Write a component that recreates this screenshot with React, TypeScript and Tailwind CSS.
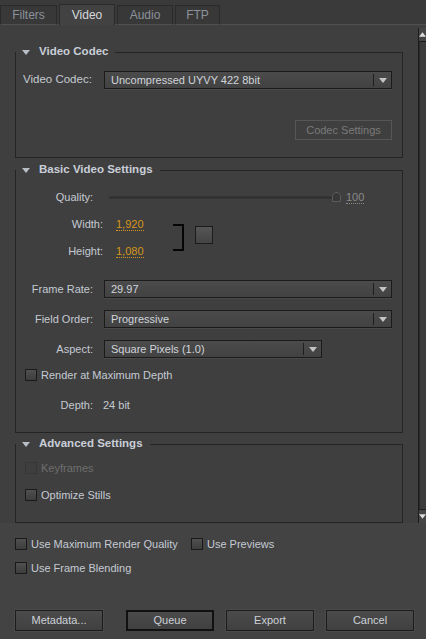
import React from "react";

function Caret({ className = "" }: { className?: string }) {
  return (
    <svg width="8" height="5" viewBox="0 0 8 5" className={className}>
      <path d="M0 0 H8 L4 5 Z" fill="currentColor" />
    </svg>
  );
}

function Select({ value, className = "" }: { value: string; className?: string }) {
  return (
    <div
      className={`flex h-[18px] items-stretch border border-[#1b1b1b] bg-linear-to-b from-[#4b4b4b] to-[#424242] shadow-[0_1px_0_#4a4a4a] ${className}`}
    >
      <span className="flex-1 truncate pl-[6px] leading-[16px] text-[#d0d4db]">{value}</span>
      <span className="my-[2px] w-px bg-[#1e1e1e]" />
      <span className="flex w-[17px] items-center justify-center text-[#c4c4c4]">
        <Caret />
      </span>
    </div>
  );
}

function Check({ disabled }: { disabled?: boolean }) {
  return (
    <span
      className={`h-[12px] w-[12px] shrink-0 border ${
        disabled
          ? "border-[#363636] bg-[#3e3e3e]"
          : "border-[#1a1a1a] bg-linear-to-b from-[#505050] to-[#3d3d3d]"
      }`}
    />
  );
}

function CheckRow({ label, disabled, className = "" }: { label: string; disabled?: boolean; className?: string }) {
  return (
    <div className={`flex h-[14px] items-center gap-[4px] ${className}`}>
      <Check disabled={disabled} />
      <span className={disabled ? "text-[#6e6e6e]" : "text-[#c5cad3]"}>{label}</span>
    </div>
  );
}

function Section({ title, children, className = "" }: { title: string; children: React.ReactNode; className?: string }) {
  return (
    <fieldset className={`border border-[#242424] px-0 ${className}`}>
      <legend className="flex h-[14px] items-center pr-[7px]">
        <Caret className="ml-[6px] text-[#b9bec6]" />
        <span className="ml-[9px] text-[11.5px] font-bold text-[#c9ced8]">{title}</span>
      </legend>
      {children}
    </fieldset>
  );
}

function Label({ children, w = "w-[77px]" }: { children: React.ReactNode; w?: string }) {
  return <span className={`${w} shrink-0 text-right text-[#c5cad3]`}>{children}</span>;
}

function Btn({ children, primary }: { children: React.ReactNode; primary?: boolean }) {
  return (
    <button
      type="button"
      className={`h-[21px] w-[88px] shrink-0 bg-linear-to-b from-[#4b4b4b] to-[#404040] text-[#cdd1d8] ${
        primary ? "border-2 border-[#111]" : "border border-[#1c1c1c] shadow-[0_0_0_1px_#4a4a4a]"
      }`}
    >
      {children}
    </button>
  );
}

const TABS = [
  { name: "Filters", w: "w-[57px]" },
  { name: "Video", w: "w-[56px]", active: true },
  { name: "Audio", w: "w-[56px]" },
  { name: "FTP", w: "w-[45px]" },
];

export default function App() {
  return (
    <div className="flex h-[639px] w-[426px] flex-col overflow-hidden bg-[#3f3f3f] font-['Liberation_Sans',Arial,sans-serif] text-[11px]">
      {/* tabs */}
      <div className="flex h-[25px] shrink-0 items-end gap-[2px] border-b border-[#505050] bg-[#3a3a3a]">
        {TABS.map((t) => (
          <div
            key={t.name}
            className={`${t.w} -mb-px flex h-[20px] items-center justify-center border-x border-t border-[#2a2a2a] text-[12px] ${
              t.active
                ? "h-[21px] bg-[#424242] text-[#d6d9de]"
                : "border-b border-b-[#505050] bg-[#383838] text-[#8c929b]"
            }`}
          >
            {t.name}
          </div>
        ))}
      </div>

      {/* scroll area */}
      <div className="flex h-[498px] shrink-0">
        <div className="flex-1 px-[15px] pt-[20px]">
          <Section title="Video Codec" className="pb-[17px]">
            <div className="mt-[12px] flex items-center pl-[7px] pr-[10px]">
              <span className="w-[81px] shrink-0 text-[11.5px] text-[#c5cad3]">Video Codec:</span>
              <Select value="Uncompressed UYVY 422 8bit" className="flex-1" />
            </div>
            <div className="mt-[31px] flex justify-end pr-[10px]">
              <div className="flex h-[20px] w-[97px] items-center justify-center border border-[#565656] text-[#7a7a7a]">
                Codec Settings
              </div>
            </div>
          </Section>

          <Section title="Basic Video Settings" className="mt-[5px] pb-[20px]">
            {/* quality */}
            <div className="mt-[13px] flex h-[14px] items-center">
              <Label>Quality:</Label>
              <div className="relative ml-[16px] h-[10px] w-[232px]">
                <div className="absolute left-0 right-[4px] top-[4px] h-[3px] border-y border-[#363636] bg-[#2e2e2e]" />
                <svg width="9" height="10" viewBox="0 0 9 10" className="absolute right-0 top-0">
                  <path d="M0.5 9.5 V3.5 L3 0.5 H6 L8.5 3.5 V9.5 Z" fill="#383838" stroke="#5c5c5c" />
                </svg>
              </div>
              <span className="ml-[5px] border-b border-dotted border-[#8a8a8a] leading-[12px] text-[#8a8a8a]">100</span>
            </div>

            {/* width / height */}
            <div className="mt-[13px] flex items-center">
              <div className="flex flex-col gap-[13px]">
                <div className="flex h-[14px] items-center">
                  <Label w="w-[87px]">Width:</Label>
                  <span className="ml-[13px] w-[57px]">
                    <span className="border-b border-dotted border-[#d4961a] leading-[12px] text-[#d4961a]">1,920</span>
                  </span>
                </div>
                <div className="flex h-[14px] items-center">
                  <Label w="w-[87px]">Height:</Label>
                  <span className="ml-[13px] w-[57px]">
                    <span className="border-b border-dotted border-[#d4961a] leading-[12px] text-[#d4961a]">1,080</span>
                  </span>
                </div>
              </div>
              <div className="h-[27px] w-[11px] border-y-2 border-r-2 border-[#050505]" />
              <div className="-mt-[6px] ml-[11px] h-[18px] w-[18px] border border-[#1c1c1c] bg-linear-to-b from-[#555] to-[#444]" />
            </div>

            {/* selects */}
            <div className="mt-[22px] flex items-center pr-[10px]">
              <Label>Frame Rate:</Label>
              <Select value="29.97" className="ml-[11px] flex-1" />
            </div>
            <div className="mt-[12px] flex items-center pr-[10px]">
              <Label>Field Order:</Label>
              <Select value="Progressive" className="ml-[11px] flex-1" />
            </div>
            <div className="mt-[12px] flex items-center">
              <Label>Aspect:</Label>
              <Select value="Square Pixels (1.0)" className="ml-[11px] w-[218px]" />
            </div>

            <CheckRow label="Render at Maximum Depth" className="ml-[9px] mt-[10px]" />

            <div className="mt-[16px] flex h-[14px] items-center">
              <Label>Depth:</Label>
              <span className="ml-[10px] text-[#c5cad3]">24 bit</span>
            </div>
          </Section>

          <Section title="Advanced Settings" className="mt-[4px] pb-[20px]">
            <CheckRow label="Keyframes" disabled className="ml-[9px] mt-[10px]" />
            <CheckRow label="Optimize Stills" className="ml-[9px] mt-[13px]" />
          </Section>
        </div>

        {/* scrollbar */}
        <div className="mt-[3px] flex w-[8px] flex-col border-l border-[#1c1c1c] bg-[#3c3c3c]">
          <div className="flex h-[14px] items-center justify-center border-b border-[#1c1c1c] bg-[#464646] text-[#dcdcdc]">
            <Caret className="rotate-180" />
          </div>
          <div className="flex-1 border-l border-[#2a2a2a]" />
          <div className="flex h-[14px] items-center justify-center border-t border-[#1c1c1c] bg-[#464646] text-[#dcdcdc]">
            <Caret />
          </div>
        </div>
      </div>

      {/* bottom */}
      <div className="flex-1 bg-[#434343] pl-[15px] pt-[14px]">
        <div className="flex">
          <CheckRow label="Use Maximum Render Quality" className="w-[176px]" />
          <CheckRow label="Use Previews" />
        </div>
        <CheckRow label="Use Frame Blending" className="mt-[10px]" />
        <div className="mt-[35px] flex">
          <Btn>Metadata...</Btn>
          <div className="ml-[23px] flex gap-[12px]">
            <Btn primary>Queue</Btn>
            <Btn>Export</Btn>
            <Btn>Cancel</Btn>
          </div>
        </div>
      </div>
    </div>
  );
}
